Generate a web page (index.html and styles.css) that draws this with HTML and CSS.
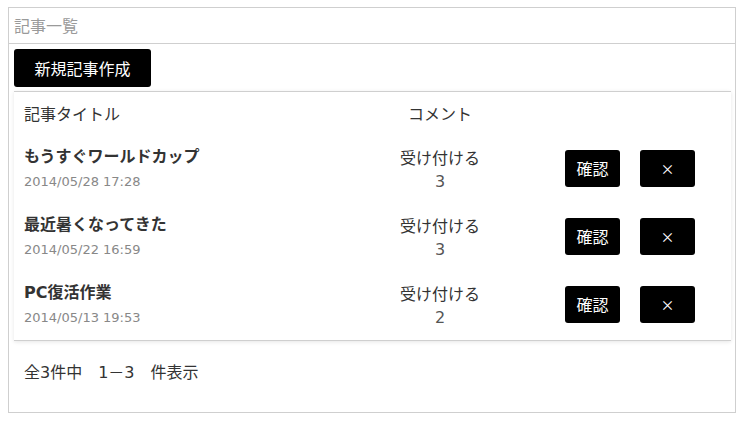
FILE: index.html
```html
<!DOCTYPE html>
<html lang="ja">
<head>
	<meta charset="utf-8">
	<title>記事一覧</title>
	<link rel="stylesheet" href="styles.css">
</head>
<body>
	<div class="panel">
		<div class="panelHead">記事一覧</div>
		<div class="panelBody">
			<button class="btn btnNew" type="button">新規記事作成</button>

			<div class="list">
				<div class="row rowHead">
					<div class="colTitle">記事タイトル</div>
					<div class="colComment">コメント</div>
				</div>

				<div class="row">
					<div class="colTitle">
						<p class="title">もうすぐワールドカップ</p>
						<p class="date">2014/05/28 17:28</p>
					</div>
					<div class="colComment">
						<p class="state">受け付ける</p>
						<p class="count">3</p>
					</div>
					<div class="spacer"></div>
					<button class="btn btnSmall" type="button">確認</button>
					<button class="btn btnSmall btnDel" type="button">×</button>
				</div>

				<div class="row">
					<div class="colTitle">
						<p class="title">最近暑くなってきた</p>
						<p class="date">2014/05/22 16:59</p>
					</div>
					<div class="colComment">
						<p class="state">受け付ける</p>
						<p class="count">3</p>
					</div>
					<div class="spacer"></div>
					<button class="btn btnSmall" type="button">確認</button>
					<button class="btn btnSmall btnDel" type="button">×</button>
				</div>

				<div class="row">
					<div class="colTitle">
						<p class="title">PC復活作業</p>
						<p class="date">2014/05/13 19:53</p>
					</div>
					<div class="colComment">
						<p class="state">受け付ける</p>
						<p class="count">2</p>
					</div>
					<div class="spacer"></div>
					<button class="btn btnSmall" type="button">確認</button>
					<button class="btn btnSmall btnDel" type="button">×</button>
				</div>
			</div>

			<div class="pager">全3件中　1－3　件表示</div>
		</div>
	</div>
</body>
</html>
```

FILE: styles.css
```css
:root {
	--lineColor: #cfcfcf;
	--textColor: #333333;
	--mutedColor: #9a9a9a;
	--dateColor: #888888;
	--mixFont: "DejaVu Sans", "Noto Sans CJK JP", sans-serif;
}

body {
	margin: 7px 10px 0 8px;
	background-color: #ffffff;
	font-family: "Noto Sans CJK JP", "Noto Sans", sans-serif;
	color: var(--textColor);
}

p {
	margin: 0;
}

.panel {
	height: 404px;
	border: 1px solid var(--lineColor);
}

.panelHead {
	height: 35px;
	padding-left: 5px;
	border-bottom: 1px solid var(--lineColor);
	font-size: 16px;
	line-height: 34px;
	color: var(--mutedColor);
}

.panelBody {
	padding: 5px 4px 0 5px;
}

.btn {
	border: none;
	border-radius: 3px;
	background-color: #000000;
	color: #ffffff;
	font-family: "Noto Sans CJK JP", sans-serif;
	padding: 0;
	cursor: pointer;
}

.btnNew {
	display: block;
	width: 137px;
	height: 38px;
	font-size: 16px;
}

.list {
	margin-top: 4px;
	padding: 0 36px 3px 10px;
	border-top: 1px solid var(--lineColor);
	border-bottom: 1px solid var(--lineColor);
	box-shadow: 0 1px 4px rgba(0, 0, 0, 0.1);
}

.row {
	display: grid;
	grid-template-columns: 330px 132px 1fr 55px 55px;
	column-gap: 20px;
	align-items: center;
	height: 68px;
}

.rowHead {
	height: 41px;
	font-size: 16px;
}

.row .colTitle,
.row .colComment {
	padding-top: 5px;
}

.rowHead .colTitle,
.rowHead .colComment {
	padding-top: 0;
}

.colComment {
	text-align: center;
}

.title {
	font-family: var(--mixFont);
	font-size: 16px;
	font-weight: bold;
	line-height: 22px;
}

.date {
	margin-top: 3px;
	font-family: "DejaVu Sans", sans-serif;
	font-size: 13px;
	line-height: 22px;
	color: var(--dateColor);
}

.state {
	font-size: 16px;
	line-height: 22px;
}

.count {
	margin-top: 2px;
	font-family: "DejaVu Sans", sans-serif;
	font-size: 16px;
	line-height: 24px;
	color: #555555;
}

.btnSmall {
	height: 37px;
	margin-top: 2px;
	font-size: 16px;
}

.btnDel {
	font-size: 14px;
}

.pager {
	padding: 20px 10px 16px;
	font-family: var(--mixFont);
	font-size: 16px;
	line-height: 24px;
}
```
